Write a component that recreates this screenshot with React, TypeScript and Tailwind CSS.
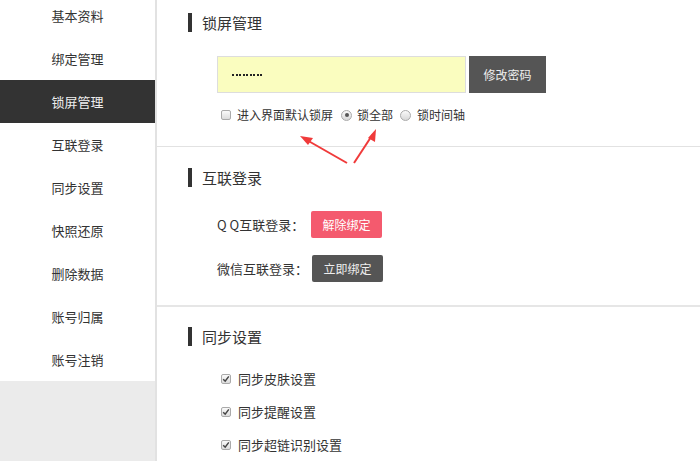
const menu = ['基本资料', '绑定管理', '锁屏管理', '互联登录', '同步设置', '快照还原', '删除数据', '账号归属', '账号注销'];

const font = { fontFamily: '"Microsoft YaHei", "Noto Sans CJK SC", "Noto Sans", sans-serif' };

function Heading({ title }: { title: string }) {
  return (
    <div className="flex h-[19px] items-center pl-[31px]">
      <span className="h-[19px] w-[4px] bg-[#333]" />
      <span className="ml-[10px] text-[15px] leading-none text-[#333]">{title}</span>
    </div>
  );
}

function CheckBox({ checked }: { checked?: boolean }) {
  return (
    <span className="flex h-[10px] w-[10px] items-center justify-center rounded-[2px] border border-[#aaa] bg-gradient-to-b from-[#fafafa] to-[#dcdcdc]">
      {checked && (
        <svg width="8" height="8" viewBox="0 0 8 8">
          <path d="M1.2 4.2 L3.2 6.2 L6.8 1.4" fill="none" stroke="#444" strokeWidth="1.5" />
        </svg>
      )}
    </span>
  );
}

function Radio({ checked }: { checked?: boolean }) {
  return (
    <span className="flex h-[11px] w-[11px] items-center justify-center rounded-full border border-[#aaa] bg-gradient-to-b from-[#fafafa] to-[#d8d8d8]">
      {checked && <span className="h-[4px] w-[4px] rounded-full bg-[#555]" />}
    </span>
  );
}

export default function App() {
  return (
    <div className="flex h-[461px] w-[700px] overflow-hidden bg-white" style={font}>
      <aside className="-mt-[6px] flex w-[157px] flex-col border-r-2 border-[#e2e2e2]">
        {menu.map((item) => (
          <div
            key={item}
            className={
              item === '锁屏管理'
                ? 'flex h-[43px] items-center justify-center bg-[#333] text-[13px] text-[#eee]'
                : 'flex h-[43px] items-center justify-center text-[13px] text-[#333]'
            }
          >
            {item}
          </div>
        ))}
        <div className="flex-1 bg-[#ebebeb]" />
      </aside>

      <main className="relative flex-1">
        <section className="h-[146px] pt-[13px]">
          <Heading title="锁屏管理" />
          <div className="mt-[24px] flex pl-[60px]">
            <div className="flex h-[37px] w-[249px] items-center gap-[1.5px] border border-[#ddd] bg-[#fafdbf] pl-[14px]">
              {[0, 1, 2, 3, 4, 5, 6, 7, 8].map((i) => (
                <span key={i} className="h-[2px] w-[2px] bg-[#222]" />
              ))}
            </div>
            <button className="ml-[3px] h-[37px] w-[77px] bg-[#555] text-[12px] text-[#eee]">修改密码</button>
          </div>
          <div className="mt-[13px] flex items-center pl-[64px] text-[12px] text-[#333]">
            <CheckBox />
            <span className="ml-[6px]">进入界面默认锁屏</span>
            <span className="ml-[8px]"><Radio checked /></span>
            <span className="ml-[5px]">锁全部</span>
            <span className="ml-[7px]"><Radio /></span>
            <span className="ml-[6px]">锁时间轴</span>
          </div>
        </section>

        <section className="h-[159px] border-t border-[#e2e2e2] pt-[21px]">
          <Heading title="互联登录" />
          <div className="mt-[24px] flex items-center pl-[60px] text-[13px] text-[#333]">
            <span className="w-[94px]">Q&nbsp;Q互联登录：</span>
            <button className="h-[27px] w-[71px] rounded-[2px] bg-[#f45a6e] text-[12px] text-white">解除绑定</button>
          </div>
          <div className="mt-[17px] flex items-center pl-[60px] text-[13px] text-[#333]">
            <span className="w-[95px]">微信互联登录：</span>
            <button className="h-[27px] w-[71px] rounded-[2px] bg-[#555] text-[12px] text-[#eee]">立即绑定</button>
          </div>
        </section>

        <section className="border-t-2 border-[#e6e6e6] pt-[20px]">
          <Heading title="同步设置" />
          <div className="mt-[26px] flex flex-col gap-[19px] pl-[64px] text-[13px] text-[#333]">
            {['同步皮肤设置', '同步提醒设置', '同步超链识别设置'].map((t) => (
              <div key={t} className="flex h-[14px] items-center">
                <CheckBox checked />
                <span className="ml-[7px]">{t}</span>
              </div>
            ))}
          </div>
        </section>

        <svg className="pointer-events-none absolute left-0 top-0" width="543" height="200">
          <g stroke="#f03a3a" strokeWidth="2" fill="#f03a3a">
            <line x1="190" y1="163" x2="148" y2="139" />
            <polygon points="143,136 156,138 151,145" stroke="none" />
            <line x1="197" y1="163" x2="216" y2="134" />
            <polygon points="219,129 218,142 211,138" stroke="none" />
          </g>
        </svg>
      </main>
    </div>
  );
}
